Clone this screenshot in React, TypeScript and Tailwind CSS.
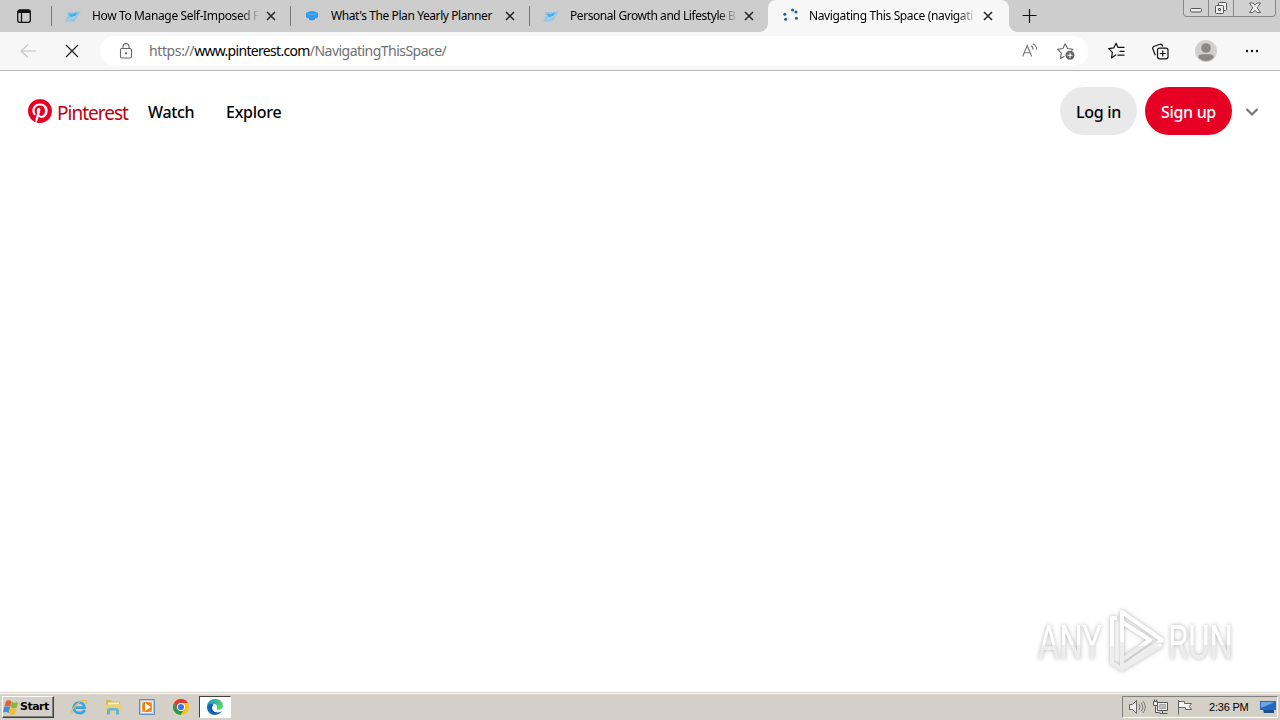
import type { ReactNode } from 'react';
import clsx from 'clsx';
import { SiPinterest } from 'react-icons/si';

const pages = [
  { id: 1, title: 'How To Manage Self-Imposed F', icon: 'bird', tracking: 'tracking-[-0.37px]' },
  { id: 2, title: "What's The Plan Yearly Planner", icon: 'box', tracking: 'tracking-[-0.41px]' },
  { id: 3, title: 'Personal Growth and Lifestyle B', icon: 'bird', tracking: 'tracking-[-0.44px]' },
];

export default function App() {
  return (
    <div className="flex h-[720px] w-[1280px] flex-col overflow-hidden bg-white font-['Noto_Sans',sans-serif] text-black">
      <TabStrip />
      <Toolbar />
      <main className="relative min-h-0 flex-1">
        <SiteHeader />
        <Watermark />
      </main>
      <Taskbar />
    </div>
  );
}

function TabStrip() {
  return (
    <div className="flex h-8 shrink-0 bg-[#cdcdcd]">
      <div className="flex w-[51px] shrink-0 items-center pl-4">
        <svg width="16" height="16" viewBox="0 0 16 16" fill="none" stroke="#111" strokeWidth="1.3">
          <rect x="1.7" y="2" width="12.6" height="12.3" rx="2" />
          <path d="M2 4h12M2.500 3h11" strokeWidth="1.8" />
          <path d="M5.500 5v9" />
        </svg>
      </div>
      {pages.map((page) => (
        <div key={page.id} className="flex w-[239px] shrink-0 items-center">
          <span className="h-5 w-px bg-[#777]" />
          <span className="ml-[13px] w-4">{page.icon === 'bird' ? <BirdIcon /> : <BoxIcon />}</span>
          <TabTitle title={page.title} tracking={page.tracking} fade={page.id !== 2} />
          <CloseIcon />
        </div>
      ))}
      <div className="relative flex w-[241px] shrink-0 items-center rounded-t-lg bg-[#f7f7f7] pl-[14px]">
        {/* curved feet of the active tab */}
        <span className="absolute bottom-0 -left-2 h-2 w-2 bg-[radial-gradient(circle_at_0_0,#cdcdcd_7.5px,#f7f7f7_8px)]" />
        <span className="absolute -right-2 bottom-0 h-2 w-2 bg-[radial-gradient(circle_at_100%_0,#cdcdcd_7.5px,#f7f7f7_8px)]" />
        <svg width="16" height="16" viewBox="0 0 16 16" fill="#1f5f9f">
          <circle cx="2.800" cy="6.300" r="1.500" />
          <circle cx="3.600" cy="11.300" r="1.500" />
          <circle cx="10.500" cy="1.900" r="1.500" />
          <circle cx="14" cy="4" r="1.500" />
          <circle cx="14.400" cy="10.200" r="1.500" />
        </svg>
        <TabTitle title="Navigating This Space (navigati" tracking="tracking-[-0.37px]" fade />
        <CloseIcon />
      </div>
      <div className="flex flex-1 items-start justify-between pr-1 pl-3">
        <svg className="mt-2" width="16" height="16" viewBox="0 0 16 16" stroke="#111" strokeWidth="1.200">
          <path d="M8.500 1v14M1.500 7.500h14" />
        </svg>
        <WindowButtons />
      </div>
    </div>
  );
}

function TabTitle({ title, tracking, fade }: { title: string; tracking: string; fade: boolean }) {
  return (
    <span
      className={clsx(
        'ml-[11px] w-[170px] shrink-0 overflow-hidden text-[12px] leading-5 whitespace-nowrap',
        tracking,
        fade && '[mask-image:linear-gradient(to_right,#000_148px,transparent_168px)]',
      )}
    >
      {title}
    </span>
  );
}

function CloseIcon() {
  return (
    <svg className="ml-1" width="10" height="10" viewBox="0 0 10 10" stroke="#222" strokeWidth="1.500">
      <path d="M1 1l8 8M9 1L1 9" />
    </svg>
  );
}

function BirdIcon() {
  return (
    <svg width="16" height="16" viewBox="0 0 16 16">
      <path d="M0 13.500L3 8 1.500 4.500l4-.5 5 .5L16 2.500 13 8l-3.500 5-4 .5z" fill="#93c6e4" />
      <path d="M4 5.500l3.500 1L12 4l-1.500 4L6 10z" fill="#45a9ea" />
      <path d="M2 12l4-3 7-2-4 4z" fill="#a5cde5" />
    </svg>
  );
}

function BoxIcon() {
  return (
    <svg width="16" height="16" viewBox="0 0 16 16">
      <path d="M2 5q6-4 12 0v4q-1 1.500-3 1.500v1q-3 2-6 0v-1Q3 10 2 9z" fill="#3299ee" />
      <path d="M3 5.500l5 1.200 5-1.200" fill="none" stroke="#6cb9f5" strokeWidth="0.700" />
    </svg>
  );
}

function WindowButtons() {
  return (
    <div className="flex h-[17px] w-[93px] rounded-b-[4px] border border-t-0 border-[#888] bg-[#d1d1d1]">
      <span className="flex w-[25px] justify-center border-r border-[#888]">
        <svg width="14" height="16" viewBox="0 0 14 16" fill="#eee" stroke="#555">
          <rect x="1.500" y="8.500" width="11" height="3.500" rx="1.200" />
        </svg>
      </span>
      <span className="flex w-[25px] justify-center border-r border-[#888]">
        <svg width="14" height="16" viewBox="0 0 14 16" fill="#eee" stroke="#555">
          <rect x="4.500" y="2.500" width="8" height="8" rx="1" />
          <rect x="1.500" y="5.500" width="8" height="8" rx="1" />
          <path d="M4.500 8.500h2v2h-2z" />
        </svg>
      </span>
      <span className="flex flex-1 justify-center">
        <svg width="14" height="16" viewBox="0 0 14 16" fill="#eee" stroke="#555" strokeWidth="0.900">
          <path d="M1.500 3h3.600L7 5.300 8.900 3h3.600L9.200 7.800l3.300 4.700H8.900L7 10.200l-1.900 2.300H1.500l3.300-4.700z" />
        </svg>
      </span>
    </div>
  );
}

function Toolbar() {
  return (
    <div className="flex h-[39px] shrink-0 items-center border-b border-[#b8b8b8] bg-[#f7f7f7]">
      <svg className="ml-5" width="16" height="16" viewBox="0 0 16 16" fill="none" stroke="#c5c5c5" strokeWidth="1.100">
        <path d="M16 8H1M8 1.500L1 8l7 6.500" />
      </svg>
      <svg className="ml-[29px]" width="14" height="14" viewBox="0 0 14 14" stroke="#222" strokeWidth="1.200">
        <path d="M1 1l12 12M13 1L1 13" />
      </svg>
      <div className="ml-[21px] flex h-[30px] w-[988px] items-center rounded-full bg-white pl-[19px]">
        <svg width="14" height="16" viewBox="0 0 14 16" fill="none" stroke="#666" strokeWidth="1.100">
          <rect x="1.500" y="5.500" width="11" height="9.500" rx="1.500" />
          <path d="M4 5.500V3.600a3 3 0 016 0v1.900" />
          <circle cx="7" cy="10.300" r="0.600" fill="#666" />
        </svg>
        <span className="ml-4 w-[840px] text-[14px] leading-5 tracking-[-0.39px] text-[#707070]">
          https://<span className="tracking-[-0.68px] text-black">www.pinterest.com</span>
          <span className="tracking-[-0.53px]">/NavigatingThisSpace/</span>
        </span>
        <ReadAloudIcon />
        <FavoriteAddIcon />
      </div>
      <FavoritesIcon />
      <CollectionsIcon />
      <svg className="ml-[26px]" width="22" height="22" viewBox="0 0 22 22">
        <circle cx="11" cy="11" r="11" fill="#d2d0ce" />
        <circle cx="11" cy="8" r="4.800" fill="#8a8886" />
        <path d="M3.300 17.500c0-2.400 2-3.200 3.600-3.200h8.200c1.800 0 3.600 1 3.600 3.200-2 2.400-4.600 3.500-7.700 3.500s-5.800-1.200-7.700-3.500z" fill="#8a8886" />
      </svg>
      <svg className="ml-7" width="14" height="4" viewBox="0 0 14 4" fill="#111">
        <circle cx="2" cy="2" r="1.200" />
        <circle cx="7" cy="2" r="1.200" />
        <circle cx="12" cy="2" r="1.200" />
      </svg>
    </div>
  );
}

function ReadAloudIcon() {
  return (
    <svg className="ml-[33px]" width="16" height="16" viewBox="0 0 16 16" fill="none" stroke="#777" strokeWidth="1.100">
      <path d="M.7 13.500L5.200 2.500l4.600 11M2.300 9.800h6M9 2.800c1.500.8 2.200 2.200 2 4M10.800.8c2.600 1.300 4 3.500 3.700 6" />
    </svg>
  );
}

function FavoriteAddIcon() {
  return (
    <svg className="ml-[19px]" width="18" height="18" viewBox="0 0 18 18" fill="none" stroke="#666" strokeWidth="1.100">
      <path d="M7.500 14.300L3.500 16.400l.8-5.300L.7 7.300l5.100-.8L8.200 1.700l2.400 4.800 5.200.8-1.300 1.300" strokeLinejoin="round" />
      <circle cx="13" cy="13.300" r="4.500" fill="#666" stroke="none" />
      <path d="M13 10.800v5M10.500 13.300h5" stroke="#fff" />
    </svg>
  );
}

function FavoritesIcon() {
  return (
    <svg className="ml-5" width="18" height="18" viewBox="0 0 18 18" fill="none" stroke="#111" strokeWidth="1.200">
      <path d="M8 12.800L3.500 15.900l.9-5.500L.7 6.700l5-.8 2.400-4.700 1.900 4.200h6.500M11.500 9.300h5M9.500 13.200h7" strokeLinejoin="round" />
    </svg>
  );
}

function CollectionsIcon() {
  return (
    <svg className="ml-[26px]" width="17" height="17" viewBox="0 0 17 17" fill="none" stroke="#111" strokeWidth="1.200">
      <path d="M3.300 12.200L.8 5.800c-.4-1 .1-2 1-2.300L8 1.300c1-.4 2 .2 2.300 1l.4 1.200" />
      <rect x="5.500" y="5.200" width="10.500" height="10.600" rx="2" />
      <path d="M10.750 7.500v6M7.800 10.500h6" />
    </svg>
  );
}

function SiteHeader() {
  return (
    <header className="flex h-20 items-center">
      <SiPinterest className="ml-7 h-6 w-6 text-[#e60023]" />
      <span className="mt-1 ml-[5px] w-[71px] text-[19px] leading-6 tracking-[-1px] text-[#c0000f]">Pinterest</span>
      <nav className="mt-0.5 ml-5 flex text-[16px] leading-6 font-medium">
        <a className="w-[78px] tracking-[-0.35px]">Watch</a>
        <a className="tracking-[-0.25px]">Explore</a>
      </nav>
      <div className="ml-auto flex items-center">
        <button className="h-12 w-[77px] rounded-full bg-[#e9e9e9] pt-0.5 text-[16px] font-medium tracking-[-0.3px]">
          Log in
        </button>
        <button className="ml-2 h-12 w-[87px] rounded-full bg-[#e60023] pt-0.5 text-[16px] font-medium tracking-[-0.33px] text-white">
          Sign up
        </button>
        <svg className="mt-px mr-[21px] ml-[13px]" width="14" height="10" viewBox="0 0 14 10" fill="none" stroke="#767676" strokeWidth="2.200">
          <path d="M1.500 2L7 7.500 12.500 2" />
        </svg>
      </div>
    </header>
  );
}

function Watermark() {
  return (
    <svg
      className="absolute right-[38px] bottom-[13px] overflow-visible drop-shadow-[0_0_2px_rgba(0,0,0,0.3)]"
      width="210"
      height="76"
      viewBox="0 0 210 76"
    >
      <defs>
        <linearGradient id="shine" x1="0" y1="0" x2="0" y2="1">
          <stop offset="0.55" stopColor="#fff" />
          <stop offset="0.55" stopColor="#ededed" />
        </linearGradient>
      </defs>
      <g fill="url(#shine)" fontFamily="Roboto, sans-serif" fontSize="49">
        <text x="6" y="56" textLength="64" lengthAdjust="spacingAndGlyphs">ANY</text>
        <text x="136" y="56" textLength="65" lengthAdjust="spacingAndGlyphs">RUN</text>
      </g>
      <g fill="none" stroke="url(#shine)" strokeWidth="4" strokeLinejoin="round">
        <path d="M90 9l40 28-40 27V9z" />
        <path d="M85 15h-5v45l10 6 40-24M90 19l28 18-28 20" />
      </g>
    </svg>
  );
}

function Taskbar() {
  return (
    <footer className="flex h-7 shrink-0 items-center border-t border-[#d4d0c8] bg-[#d4d0c8] shadow-[inset_0_1px_0_#fff]">
      <Bevel className="ml-0.5 flex h-[22px] w-[52px] items-center">
        <WindowsFlag />
        <span className="mt-0.5 ml-px font-['DejaVu_Sans',sans-serif] text-[11px] font-bold tracking-[-0.5px]">Start</span>
      </Bevel>
      <div className="ml-[17px] flex items-center gap-[18px]">
        <InternetExplorerIcon />
        <FolderIcon />
        <MediaPlayerIcon />
        <ChromeIcon />
      </div>
      <div className="ml-2.5 flex h-[22px] w-8 items-center justify-center border border-t-[#404040] border-r-white border-b-white border-l-[#404040] bg-white">
        <EdgeIcon />
      </div>
      <div className="mr-0.5 ml-auto flex h-[22px] w-[156px] items-center border border-t-[#808080] border-r-white border-b-white border-l-[#808080] pl-[5px]">
        <svg width="18" height="16" viewBox="0 0 18 16" fill="#eee" stroke="#666">
          <path d="M1.500 5.500h3l4-4v13l-4-4h-3z" />
          <path d="M11 5q2 3 0 6M13 3.500q3.500 4.500 0 9M15 2q4.500 6 0 12" fill="none" strokeWidth="0.800" />
        </svg>
        <svg className="ml-1.5" width="17" height="16" viewBox="0 0 17 16" fill="#eee" stroke="#555">
          <path d="M5.500 3.500h10v8h-10zM7.500 14.500h8M10.500 11.500v3M3.500 7.500v6h4" />
          <path d="M7.500 5.500h6v4h-6z" fill="#bbb" stroke="#aaa" />
          <path d="M1.500 2.500h4v4h-4zM2.500.5v2M4.500.5v2" />
        </svg>
        <svg className="ml-[7px]" width="17" height="16" viewBox="0 0 17 16" fill="#f4f4f4" stroke="#666">
          <path d="M2.500 1v14.500M2.500 2.500h6v2h7l-2 3 2 3h-6v-2h-7" />
        </svg>
        <span className="mt-px ml-4 w-[41px] font-['Liberation_Sans',sans-serif] text-[11px] tracking-[-0.2px] whitespace-nowrap">
          2:36 PM
        </span>
        <svg className="ml-2.5 shrink-0" width="16" height="14" viewBox="0 0 16 14">
          <path d="M0 1h16v9H0z" fill="#2467bd" />
          <path d="M1 2h14L1 8z" fill="#69a7e5" />
          <path d="M3 10h11v3H4z" fill="#155091" />
        </svg>
      </div>
    </footer>
  );
}

function Bevel({ className, children }: { className: string; children: ReactNode }) {
  return (
    <div
      className={clsx(
        'border border-t-white border-r-[#404040] border-b-[#404040] border-l-white bg-[#d4d0c8] shadow-[inset_-1px_-1px_0_#808080]',
        className,
      )}
    >
      {children}
    </div>
  );
}

function WindowsFlag() {
  return (
    <svg className="shrink-0" width="16" height="16" viewBox="0 0 16 16">
      <path d="M3 2q3-1.500 5.500.3L7.300 8Q4 6 1.500 7.500z" fill="#e9602c" />
      <path d="M8.800 2.700q3 2 6.500.3l-1.500 5.500Q10.500 10 7.600 8.300z" fill="#83b839" />
      <path d="M1.200 8Q4 6.500 7 8.500l-1.300 5.500Q3 12 0 13.600z" fill="#4a8bd0" />
      <path d="M7.400 8.800q3 2 6.200.5L12 15q-3 1.500-6-.6z" fill="#f5bd27" />
    </svg>
  );
}

function InternetExplorerIcon() {
  return (
    <svg width="16" height="16" viewBox="0 0 16 16" fill="none">
      <path d="M13.500 11c-1.500 4.500-10.500 4-10.800-2C2.500 2 13.500 1.500 13.500 8.700H4.500" stroke="#3ba4e0" strokeWidth="2.700" />
      <path d="M1.500 14.500C-1 12 7 1 14.500 1.500c1.500.3 1 2.500.3 3.500" stroke="#e9bd3e" strokeWidth="1.200" />
    </svg>
  );
}

function FolderIcon() {
  return (
    <svg width="16" height="16" viewBox="0 0 16 16">
      <path d="M1 1h5l1 1.500h8V13H1z" fill="#d8b558" />
      <path d="M3 3.500h11V9H3z" fill="#f9f4d8" />
      <path d="M0 5.500L16 5v8.500H0z" fill="#ecd079" />
      <path d="M2 15.500v-4Q2 9 5 9h6q3 0 3 2.500v4h-3v-4H5v4z" fill="#61b4df" />
    </svg>
  );
}

function MediaPlayerIcon() {
  return (
    <svg width="16" height="16" viewBox="0 0 16 16">
      <path d="M.5.5h15v15H.5z" fill="#a9c9e5" stroke="#6091bc" />
      <path d="M2.500 2.500h11v11h-11z" fill="#f5a541" stroke="#fff" strokeWidth="0.800" />
      <circle cx="8" cy="8" r="5" fill="#f07f10" />
      <path d="M6 4L12 8 6 12z" fill="#fff" />
    </svg>
  );
}

function ChromeIcon() {
  return (
    <svg width="16" height="16" viewBox="0 0 16 16">
      <circle cx="8" cy="8" r="8" fill="#fbc116" />
      <path d="M1 4.100A8 8 0 0115 4H8a4 4 0 00-3.500 6z" fill="#e33b2e" />
      <path d="M1 4.100A8 8 0 007.500 16l4-6A4 4 0 014.500 10z" fill="#249a50" />
      <circle cx="8" cy="8" r="4" fill="#fff" />
      <circle cx="8" cy="8" r="3.100" fill="#3877e4" />
    </svg>
  );
}

function EdgeIcon() {
  return (
    <svg width="16" height="16" viewBox="0 0 16 16">
      <defs>
        <linearGradient id="edge-top" x1="0" y1="0" x2="1" y2="0.300">
          <stop stopColor="#1689d8" />
          <stop offset="1" stopColor="#57d66a" />
        </linearGradient>
      </defs>
      <path d="M0 8C0-2.500 16-2.500 16 7c0 4-5.500 4.500-6.500 3 1-1 1-5-2.500-5C3 5 0 7 0 8z" fill="url(#edge-top)" />
      <path d="M0 8c.5-3 4-4 6.500-2.500C3 9 6 14 10.500 13.500c2 0 3.500-1 4.500-1.500C11 18.500 0 17 0 8z" fill="#126bb8" />
      <path d="M6.500 5.500C3 9 6 14 10.500 13.500c-3 1.500-7-.5-7-4 0-2 1.500-3.500 3-4z" fill="#0b4d91" />
    </svg>
  );
}
